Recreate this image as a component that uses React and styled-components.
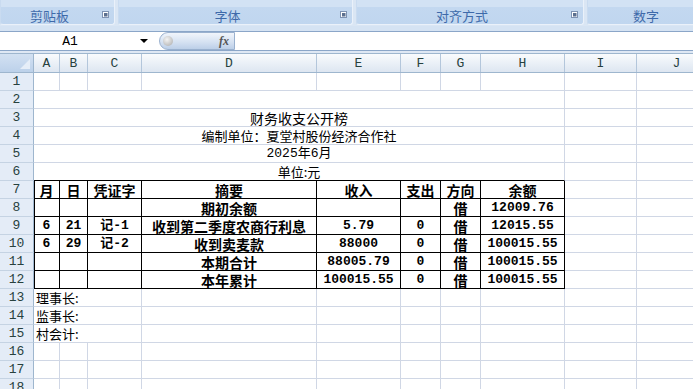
import React from 'react';
import styled, { createGlobalStyle } from 'styled-components';

const COLS = '34px 26px 28px 54px 175px 84px 40px 40px 84px 72px 80px';
const LETTERS = ['A', 'B', 'C', 'D', 'E', 'F', 'G', 'H', 'I', 'J'];
const MONO = '"Liberation Mono", "Noto Sans CJK SC", monospace';
const CJK = '"Noto Sans CJK SC", "Liberation Sans", sans-serif';

const GlobalStyle = createGlobalStyle`
  html, body {
    margin: 0;
    padding: 0;
    overflow: hidden;
    background: #fff;
  }
  body {
    font-family: ${CJK};
  }
`;

const Page = styled.div`
  width: 693px;
  height: 389px;
  overflow: hidden;
  display: flex;
  flex-direction: column;
`;

const Ribbon = styled.div`
  display: flex;
  gap: 3px;
  height: 26px;
  background: #dae6f4;
  overflow: hidden;
  flex: 0 0 auto;
`;

const Group = styled.div`
  flex: 0 0 ${(p) => p.$w}px;
  height: 25px;
  box-sizing: border-box;
  padding-top: 7px;
  display: flex;
  background: linear-gradient(#d2e2f4 0, #d2e2f4 7px, #c3d8f0 7px, #c0d6ef 100%);
  border-right: 1px solid #eaf1fa;
  border-bottom: 1px solid #eaf1fa;
  border-left: 1px solid #c9dbf0;
  border-radius: 0 0 3px 3px;
`;

const GroupLabel = styled.div`
  flex: 1;
  text-align: center;
  line-height: 17px;
  font-size: 13px;
  color: #3e6aaa;
`;

const Launcher = styled.svg`
  flex: 0 0 7px;
  margin: 4px 5px 0 4px;
`;

const RibbonFoot = styled.div`
  height: 5px;
  background: #d5e3f3;
  flex: 0 0 auto;
`;

const FormulaBar = styled.div`
  display: flex;
  align-items: center;
  height: 20px;
  box-sizing: border-box;
  border-top: 1px solid #8ba6c8;
  border-bottom: 1px solid #8ba6c8;
  background: #fff;
  flex: 0 0 auto;
`;

const NameBox = styled.div`
  width: 155px;
  display: flex;
  align-items: center;
`;

const NameText = styled.div`
  flex: 1;
  text-align: center;
  font: 13px ${MONO};
  color: #000;
`;

const DropArrow = styled.div`
  width: 0;
  height: 0;
  border-left: 4px solid transparent;
  border-right: 4px solid transparent;
  border-top: 4px solid #000;
  margin-right: 7px;
`;

const FxButton = styled.div`
  width: 76px;
  height: 18px;
  margin-left: 4px;
  box-sizing: border-box;
  border: 1px solid #9ab1cf;
  border-radius: 9px 0 0 9px;
  background: linear-gradient(#f1f5fb, #d6e2f2 55%, #bccfe8);
  display: flex;
  align-items: center;
  justify-content: space-between;
  padding: 0 5px 0 3px;
`;

const Knob = styled.div`
  width: 10px;
  height: 10px;
  border-radius: 50%;
  background: radial-gradient(circle at 40% 35%, #f4f4f4, #a9a9a9);
`;

const FxText = styled.span`
  font: italic bold 12px "Liberation Serif", serif;
  color: #555;
`;

const FormulaInput = styled.div`
  flex: 1;
  height: 18px;
`;

const Gap = styled.div`
  height: 2px;
  background: #dfe8f4;
  flex: 0 0 auto;
`;

const HeaderRow = styled.div`
  display: grid;
  grid-template-columns: ${COLS};
  height: 20px;
  box-sizing: border-box;
  border-top: 1px solid #9eb6ce;
  border-bottom: 1px solid #9eb6ce;
  background: linear-gradient(#f9fbfd, #dde6f1);
  flex: 0 0 auto;
`;

const Corner = styled.div`
  background: linear-gradient(#d3e1f2, #bcd1ea);
  border-right: 1px solid #9eb6ce;
  display: flex;
  align-items: flex-end;
  justify-content: flex-end;
  padding: 0 3px 3px 0;
`;

const CornerMark = styled.div`
  width: 0;
  height: 0;
  border-left: 10px solid transparent;
  border-bottom: 10px solid #e6eef8;
`;

const ColHead = styled.div`
  border-right: 1px solid #b3c6db;
  display: flex;
  align-items: center;
  justify-content: center;
  font: 13px ${MONO};
  color: #27413e;
`;

const Row = styled.div`
  display: grid;
  grid-template-columns: ${COLS};
  height: 18px;
  flex: 0 0 auto;
`;

const RowHead = styled.div`
  background: #e4ecf7;
  border-right: 1px solid #9eb6ce;
  border-bottom: 1px solid #c5d3e3;
  display: flex;
  align-items: center;
  justify-content: center;
  font: 13px ${MONO};
  color: #27413e;
`;

const Cell = styled.div`
  grid-column: span ${(p) => p.$span || 1};
  border-right: 1px solid ${(p) => (p.$boxed ? '#000' : '#d0d7e5')};
  border-bottom: 1px solid ${(p) => (p.$boxed || p.$under ? '#000' : '#d0d7e5')};
  box-shadow: ${(p) => (p.$edge ? 'inset 1px 0 0 #000' : 'none')};
  display: flex;
  align-items: center;
  justify-content: ${(p) => (p.$left ? 'flex-start' : 'center')};
  padding: 0 2px;
  white-space: nowrap;
  overflow: hidden;
  line-height: 1;
  color: #000;
  font-family: ${(p) => (p.$mono ? MONO : CJK)};
  font-size: ${(p) => p.$size || 13}px;
  font-weight: ${(p) => (p.$bold ? 700 : 400)};
`;

const LauncherIcon = () => (
  <Launcher width="7" height="7" viewBox="0 0 7 7">
    <rect x="0.5" y="0.5" width="6" height="6" fill="#fff" stroke="#7e93b4" />
    <rect x="2" y="2" width="3.5" height="3.5" fill="#5b6f8f" />
  </Launcher>
);

const titles = {
  2: { text: '' },
  3: { text: '财务收支公开榜', size: 14 },
  4: { text: '编制单位：夏堂村股份经济合作社' },
  5: { text: '2025年6月', mono: true },
  6: { text: '单位:元', under: true },
};

const table = [
  ['月', '日', '凭证字', '摘要', '收入', '支出', '方向', '余额'],
  ['', '', '', '期初余额', '', '', '借', '12009.76'],
  ['6', '21', '记-1', '收到第二季度农商行利息', '5.79', '0', '借', '12015.55'],
  ['6', '29', '记-2', '收到卖麦款', '88000', '0', '借', '100015.55'],
  ['', '', '', '本期合计', '88005.79', '0', '借', '100015.55'],
  ['', '', '', '本年累计', '100015.55', '0', '借', '100015.55'],
];

const signers = { 13: '理事长:', 14: '监事长:', 15: '村会计:' };

const isNum = (s) => /^[0-9.\-记]+/.test(s) && !/^[\u4e00-\u9fa5]{2,}/.test(s);

const renderCells = (n) => {
  if (titles[n]) {
    const t = titles[n];
    return [
      <Cell key="m" $span={8} $under={t.under} $mono={t.mono} $size={t.size}>
        {t.text}
      </Cell>,
      <Cell key="i" />,
      <Cell key="j" />,
    ];
  }
  if (n >= 7 && n <= 12) {
    const vals = table[n - 7];
    return [
      ...vals.map((v, i) => (
        <Cell
          key={i}
          $boxed
          $edge={i === 0}
          $bold
          $mono={isNum(v)}
          $size={isNum(v) ? 13 : 14}
        >
          {v}
        </Cell>
      )),
      <Cell key="i" />,
      <Cell key="j" />,
    ];
  }
  if (signers[n]) {
    return [
      <Cell key="s" $span={3} $left>
        {signers[n]}
      </Cell>,
      ...LETTERS.slice(3).map((l) => <Cell key={l} />),
    ];
  }
  return LETTERS.map((l) => <Cell key={l} />);
};

const rows = Array.from({ length: 18 }, (_, i) => i + 1);

export default function App() {
  return (
    <Page>
      <GlobalStyle />
      <Ribbon>
        <Group $w={115}>
          <GroupLabel>剪贴板</GroupLabel>
          <LauncherIcon />
        </Group>
        <Group $w={235}>
          <GroupLabel>字体</GroupLabel>
          <LauncherIcon />
        </Group>
        <Group $w={228}>
          <GroupLabel>对齐方式</GroupLabel>
          <LauncherIcon />
        </Group>
        <Group $w={118}>
          <GroupLabel>数字</GroupLabel>
        </Group>
      </Ribbon>
      <RibbonFoot />
      <FormulaBar>
        <NameBox>
          <NameText>A1</NameText>
          <DropArrow />
        </NameBox>
        <FxButton>
          <Knob />
          <FxText>fx</FxText>
        </FxButton>
        <FormulaInput />
      </FormulaBar>
      <Gap />
      <HeaderRow>
        <Corner>
          <CornerMark />
        </Corner>
        {LETTERS.map((l) => (
          <ColHead key={l}>{l}</ColHead>
        ))}
      </HeaderRow>
      {rows.map((n) => (
        <Row key={n}>
          <RowHead>{n}</RowHead>
          {renderCells(n)}
        </Row>
      ))}
    </Page>
  );
}
